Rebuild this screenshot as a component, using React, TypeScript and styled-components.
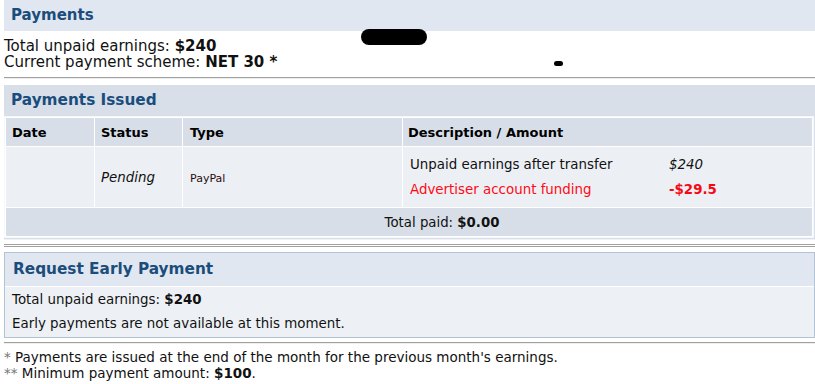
import styled, { createGlobalStyle } from 'styled-components';

const GlobalStyle = createGlobalStyle`
	body {
		margin: 0;
		background: #fff;
		font-family: 'DejaVu Sans', Verdana, sans-serif;
		color: #000;
	}
`;

function App() {
	return (
		<Page>
			<GlobalStyle />
			<TopBand>Payments</TopBand>
			<Info>
				<div>
					Total unpaid earnings: <b>$240</b>
				</div>
				<div>
					Current payment scheme: <b>NET 30 *</b>
				</div>
				<Redact $w={66} $h={16} $x={357} $y={-2} />
				<Redact $w={9} $h={5} $x={550} $y={30} />
			</Info>
			<Rule $top={7} $bottom={6} />
			<IssuedPanel>
				<PanelTitle>Payments Issued</PanelTitle>
				<Table>
					<colgroup>
						<col style={{ width: 88 }} />
						<col style={{ width: 87 }} />
						<col style={{ width: 219 }} />
						<col />
					</colgroup>
					<thead>
						<tr>
							<Th>Date</Th>
							<Th>Status</Th>
							<Th $pad={7}>Type</Th>
							<Th $pad={5}>Description / Amount</Th>
						</tr>
					</thead>
					<tbody>
						<tr>
							<Td />
							<Td>
								<i>Pending</i>
							</Td>
							<Td $pad={7}>
								<Small>PayPal</Small>
							</Td>
							<Td $pad={7}>
								<Lines>
									<Line>
										<span>Unpaid earnings after transfer</span>
										<i>$240</i>
									</Line>
									<Line $red>
										<span>Advertiser account funding</span>
										<b>-$29.5</b>
									</Line>
								</Lines>
							</Td>
						</tr>
						<tr>
							<TotalCell colSpan={4}>
								Total paid: <b>$0.00</b>
							</TotalCell>
						</tr>
					</tbody>
				</Table>
			</IssuedPanel>
			<Rule $double $top={4} $bottom={5} />
			<EarlyPanel>
				<EarlyTitle>Request Early Payment</EarlyTitle>
				<EarlyBody>
					<div>
						Total unpaid earnings: <b>$240</b>
					</div>
					<div>Early payments are not available at this moment.</div>
				</EarlyBody>
			</EarlyPanel>
			<Rule $top={4} $bottom={5} />
			<Notes>
				<div>
					<Star>*</Star> Payments are issued at the end of the month for the previous month's earnings.
				</div>
				<div>
					<Star>**</Star> Minimum payment amount: <b>$100</b>.
				</div>
			</Notes>
		</Page>
	);
}

export default App;

const Page = styled.div`
	padding-left: 4px;
	width: 811px;
`;

const TopBand = styled.h2`
	margin: 0;
	height: 31px;
	line-height: 31px;
	padding-left: 7px;
	background: #e1e7f0;
	color: #1a4d7c;
	font-size: 15px;
	font-weight: bold;
`;

const Info = styled.div`
	position: relative;
	padding-top: 7px;
	font-size: 15px;
	line-height: 16px;
	color: #111;
`;

const Redact = styled.div<{ $w: number; $h: number; $x: number; $y: number }>`
	position: absolute;
	left: ${(p) => p.$x}px;
	top: ${(p) => p.$y}px;
	width: ${(p) => p.$w}px;
	height: ${(p) => p.$h}px;
	border-radius: ${(p) => p.$h / 2}px;
	background: #000;
`;

const Rule = styled.hr<{ $double?: boolean; $top: number; $bottom: number }>`
	margin: ${(p) => `${p.$top}px 0 ${p.$bottom}px`};
	border: 0;
	border-top: 1px solid #a0a0a0;
	border-bottom: ${(p) => (p.$double ? '1px solid #a0a0a0' : '1px solid #eee')};
	height: ${(p) => (p.$double ? '1px' : '0')};
`;

const IssuedPanel = styled.div`
	background: #d8dfe9;
	padding: 0 1px 1px 0;
	border-bottom: 1px solid #eef1f5;
`;

const PanelTitle = styled.h3`
	margin: 0;
	height: 31px;
	line-height: 31px;
	padding-left: 7px;
	color: #1a4d7c;
	font-size: 15.3px;
	font-weight: bold;
`;

const Table = styled.table`
	width: 100%;
	table-layout: fixed;
	border-collapse: separate;
	border-spacing: 1px;
	border: 1px solid #f5f7fa;
	background: #fff;
	font-size: 13px;
	th,
	td {
		box-sizing: border-box;
	}
`;

const Th = styled.th<{ $pad?: number }>`
	height: 28px;
	padding: 0 0 0 ${(p) => p.$pad ?? 6}px;
	text-align: left;
	background: #d7dee8;
	color: #000;
`;

const Td = styled.td<{ $pad?: number }>`
	height: 60px;
	padding: 0 0 0 ${(p) => p.$pad ?? 6}px;
	background: #ecf0f4;
	color: #111;
	font-size: 13.4px;
`;

const Small = styled.span`
	font-size: 11px;
	color: #2a0a12;
`;

const Lines = styled.div`
	display: flex;
	flex-direction: column;
	gap: 10px;
`;

const Line = styled.div<{ $red?: boolean }>`
	display: grid;
	grid-template-columns: 259px auto;
	color: ${(p) => (p.$red ? '#ff0a14' : '#111')};
	b {
		color: #f50a14;
	}
`;

const TotalCell = styled.td`
	height: 28px;
	padding: 0 0 0 66px;
	text-align: center;
	background: #d7dee8;
	color: #111;
	font-size: 13.3px;
`;

const EarlyPanel = styled.div`
	border: 1px solid #b3c3d4;
	background: #edf1f5;
`;

const EarlyTitle = styled.h3`
	margin: 0;
	height: 33px;
	line-height: 33px;
	padding-left: 8px;
	background: #e1e7f0;
	border-bottom: 1px solid #fff;
	color: #1a4d7c;
	font-size: 15.3px;
	font-weight: bold;
`;

const EarlyBody = styled.div`
	padding: 1px 7px 1px;
	font-size: 13.4px;
	line-height: 24px;
	color: #111;
`;

const Notes = styled.div`
	font-size: 13.5px;
	line-height: 16px;
	color: #111;
`;

const Star = styled.span`
	color: #777;
`;
